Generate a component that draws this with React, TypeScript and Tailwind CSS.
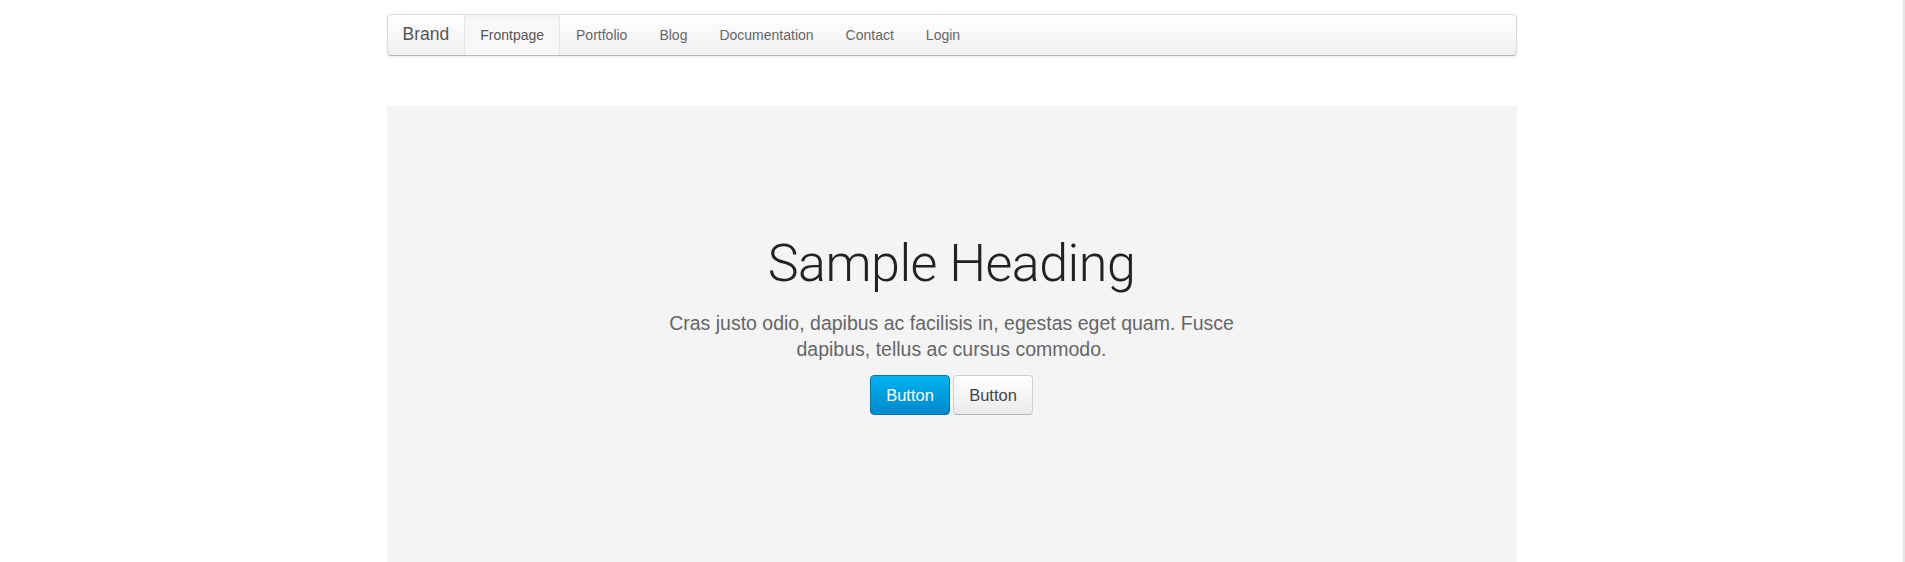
import React from "react";

const links = ["Portfolio", "Blog", "Documentation", "Contact", "Login"];

export default function App() {
  return (
    <div className="flex min-h-[562px] w-full bg-white" style={{ fontFamily: '"Liberation Sans", Arial, sans-serif' }}>
      <div className="flex-1 min-w-0">
        <div className="mx-auto w-[1130px] pt-[14px]">
          <nav className="flex h-[42px] items-stretch rounded-[4px] border border-[#dcdcdc] border-b-[#b8b8b8] bg-gradient-to-b from-white to-[#f0f0f0] shadow-[0_1px_3px_rgba(0,0,0,0.08)]">
            <a className="flex items-center pl-[15px] pr-[15px] text-[17.5px] text-[#555] pb-[2px]">Brand</a>
            <a className="flex items-center border-x border-[#e6e6e6] bg-[#f8f8f8] px-[15px] pt-[1px] text-[14px] text-[#555] shadow-[inset_0_2px_4px_rgba(0,0,0,0.03)]">
              Frontpage
            </a>
            {links.map((l) => (
              <a key={l} className="flex items-center px-[16px] pt-[1px] text-[14px] text-[#666]">
                {l}
              </a>
            ))}
          </nav>
          <section className="mt-[50px] flex h-[470px] flex-col items-center bg-[#f4f4f4] pt-[128px]">
            <h1
              className="text-[52px] leading-[60px] font-light text-[#222] tracking-[-0.5px]"
              style={{ fontFamily: 'Roboto, "Liberation Sans", sans-serif' }}
            >
              Sample Heading
            </h1>
            <p className="mt-[16px] w-[590px] text-center text-[19.5px] leading-[26px] text-[#666]">
              Cras justo odio, dapibus ac facilisis in, egestas eget quam. Fusce dapibus, tellus ac cursus commodo.
            </p>
            <div className="mt-[13px] flex gap-[3px]">
              <button className="h-[40px] w-[80px] rounded-[4px] border border-[#0077b0] bg-gradient-to-b from-[#00b3ee] to-[#0088cc] text-[16.5px] text-white">
                Button
              </button>
              <button className="h-[40px] w-[80px] rounded-[4px] border border-[#cfcfcf] border-b-[#b5b5b5] bg-gradient-to-b from-white to-[#ebebeb] text-[16.5px] text-[#444]">
                Button
              </button>
            </div>
          </section>
        </div>
      </div>
      <div className="w-[2px] shrink-0 bg-[#e6e6e6]" />
    </div>
  );
}
